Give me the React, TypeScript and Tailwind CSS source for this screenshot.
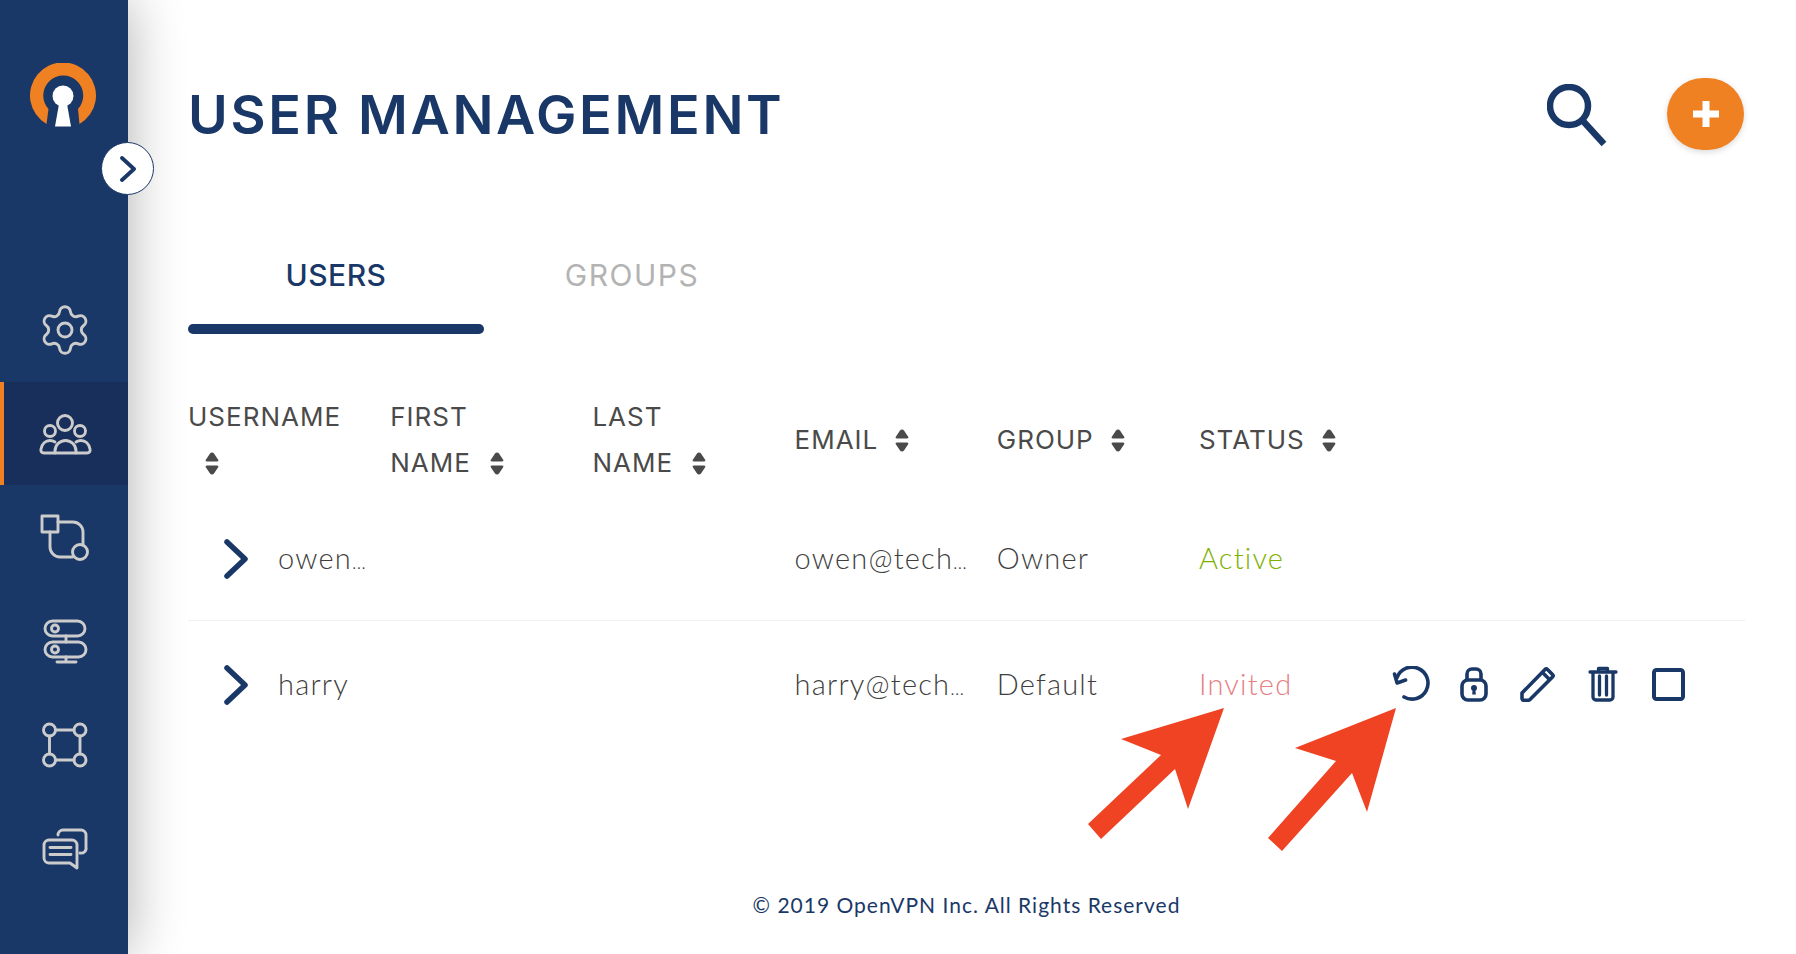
import { ReactNode } from 'react';
import { Settings } from 'lucide-react';

const NAVY = '#1a3867';

function NavIcon({ children }: { children: ReactNode }) {
  return (
    <svg width="56" height="56" viewBox="0 0 56 56" fill="none" stroke="#cccccc" strokeWidth="2.9" strokeLinecap="round" strokeLinejoin="round">
      {children}
    </svg>
  );
}

function NavRow({ active, children }: { active?: boolean; children: ReactNode }) {
  return (
    <div className={active
      ? 'h-[103.6px] flex items-center pl-[33px] pt-[3px] bg-[#182f5b] border-l-4 border-[#ef8122]'
      : 'h-[103.6px] flex items-center pl-[37px]'}>
      {children}
    </div>
  );
}

function SortIcon() {
  return (
    <svg width="14" height="23" viewBox="0 0 14 23" fill="#4a4a4a" className="inline-block">
      <path d="M7 0.500c.9 0 1.500.4 2 1l4 6c.8 1.200.4 2-1 2H2c-1.400 0-1.800-.8-1-2l4-6c.5-.6 1.100-1 2-1z" />
      <path d="M7 22.500c.9 0 1.500-.4 2-1l4-6c.8-1.200.4-2-1-2H2c-1.400 0-1.800.8-1 2l4 6c.5.6 1.100 1 2 1z" />
    </svg>
  );
}

function Chevron() {
  return (
    <svg width="24" height="40" viewBox="0 0 24 40" fill="none" stroke={NAVY} strokeWidth="5.5" strokeLinecap="round" strokeLinejoin="round" className="mt-[2px]">
      <path d="M3 3l18 17L3 37" />
    </svg>
  );
}

// the cut-off marker is much smaller than the letters in this font
function Cut() {
  return <span className="text-[19px] tracking-[0.500px]">…</span>;
}

function HeaderCell({ first, last }: { first: string; last?: string }) {
  return (
    <div className="leading-[46px]">
      {last ? (
        <>
          <div>{first}</div>
          <div className="flex items-center gap-[19px]">{last}<SortIcon /></div>
        </>
      ) : (
        <div className="flex items-center gap-[17px]">{first}<SortIcon /></div>
      )}
    </div>
  );
}

function RowActions() {
  return (
    <div className="flex items-center h-[36px] text-[#1a3867]">
      <svg width="40" height="36" viewBox="0 0 40 36" fill="none" stroke="currentColor" strokeWidth="3.6" strokeLinecap="round" strokeLinejoin="round" className="ml-[-11px]">
        <path d="M7 11.500A16 16 0 1 1 14 31" />
        <path d="M4.500 8l2.600 9 8.500-3" />
      </svg>
      <svg width="28" height="36" viewBox="0 0 28 36" fill="none" stroke="currentColor" strokeWidth="3.6" className="ml-[30px]">
        <path d="M7 15V8a5 5 0 0 1 5-5h4a5 5 0 0 1 5 5v7" />
        <rect x="2" y="14" width="24" height="20" rx="6" />
        <circle cx="14" cy="22" r="3" fill="currentColor" stroke="none" />
        <path d="M12.700 23h2.600l.5 5.500h-3.600z" fill="currentColor" stroke="none" />
      </svg>
      <svg width="36" height="36" viewBox="0 0 36 36" fill="none" stroke="currentColor" strokeWidth="3.600" strokeLinejoin="round" className="ml-[32px]">
        <path d="M2 27L25 3.500c.8-.8 1.700-.8 2.500 0l5 5c.8.8.8 1.700 0 2.500L10 33.500c-.6.6-1.200.8-2 .8H4c-1.300 0-2-.8-2-2z" />
        <path d="M22.500 6.500l8 8" />
      </svg>
      <svg width="30" height="36" viewBox="0 0 30 36" fill="none" stroke="currentColor" strokeWidth="3.300" strokeLinecap="round" strokeLinejoin="round" className="ml-[32px]">
        <path d="M2 6h26" />
        <path d="M10.500 4.500V2.500h9v2" />
        <path d="M5 7v24a3 3 0 0 0 3 3h14a3 3 0 0 0 3-3V7" />
        <path d="M11.500 10v19M18.500 10v19" />
      </svg>
      <svg width="33" height="33" viewBox="0 0 33 33" fill="none" stroke="currentColor" strokeWidth="4" strokeLinejoin="round" className="ml-[34px]">
        <rect x="2" y="2" width="29" height="29" rx="2.500" />
      </svg>
    </div>
  );
}

export default function App() {
  return (
    <div className="relative flex h-[954px] w-[1796px] overflow-hidden bg-white font-['Inter',sans-serif]">
      {/* Sidebar */}
      <aside className="relative z-10 w-[128px] shrink-0 bg-[#1a3867] shadow-[0_0_55px_rgba(0,0,0,0.32)]">
        <div className="h-[278px] pl-[30px] pt-[63px]">
          <svg width="67" height="65" viewBox="30 62 67 65">
            <path d="M46.500 123A33 33 0 1 1 79.500 123L78 108A20 20 0 1 0 48.500 108Z" fill="#ef8122" />
            <circle cx="63" cy="95" r="10.500" fill="#ffffff" />
            <path d="M59 103h8l4 22.500H55z" fill="#ffffff" />
          </svg>
        </div>

        <NavRow>
          <Settings size={56} color="#cccccc" strokeWidth={1.25} />
        </NavRow>
        <NavRow active>
          <NavIcon>
            <circle cx="28" cy="16" r="7.500" />
            <circle cx="13" cy="24" r="5.500" />
            <circle cx="43" cy="24" r="5.500" />
            <path d="M18 46v-2a10.500 10.500 0 0 1 21 0v2z" />
            <path d="M18 46H7c-2.500 0-3.500-1.500-3-4 1-5 4.500-8.500 9-8.500 2 0 3.500.5 5 1.500" />
            <path d="M39 46h11c2.500 0 3.500-1.500 3-4-1-5-4.500-8.500-9-8.500-2 0-3.500.5-5 1.500" />
          </NavIcon>
        </NavRow>
        <NavRow>
          <NavIcon>
            <rect x="5" y="7" width="16" height="16" />
            <path d="M21 13h15a10 10 0 0 1 10 10v13" />
            <path d="M13 23v15a10 10 0 0 0 10 10h12.500" />
            <circle cx="43" cy="43" r="7.500" />
          </NavIcon>
        </NavRow>
        <NavRow>
          <NavIcon>
            <rect x="8" y="8" width="40" height="15" rx="7.500" />
            <rect x="8" y="29" width="41" height="15" rx="7.500" />
            <circle cx="18" cy="15.500" r="3.500" />
            <circle cx="18" cy="36.500" r="3.500" />
            <path d="M29 23v6M29 44v5M20 49h19" />
          </NavIcon>
        </NavRow>
        <NavRow>
          <div className="pt-[2px]">
            <NavIcon>
              <circle cx="12.500" cy="13" r="6" />
              <circle cx="43" cy="13" r="6" />
              <circle cx="12.500" cy="43" r="6" />
              <circle cx="43" cy="43" r="6" />
              <path d="M18.500 13H37M18.500 43H37M12.500 19v18M43 19v18" />
            </NavIcon>
          </div>
        </NavRow>
        <NavRow>
          <div className="pt-[2px]">
            <NavIcon>
              <path d="M21 14a5 5 0 0 1 5-5h18a5 5 0 0 1 5 5v12a5 5 0 0 1-6 6" />
              <path d="M12 19h23a5 5 0 0 1 5 5v23l-7-5H12a5 5 0 0 1-5-5V24a5 5 0 0 1 5-5z" />
              <path d="M13 26.500h21M13 33.500h21" />
            </NavIcon>
          </div>
        </NavRow>

        {/* collapse toggle */}
        <button className="absolute left-[101px] top-[142px] flex h-[53px] w-[53px] items-center justify-center rounded-full bg-white border border-[#1a3867]">
          <svg width="16" height="26" viewBox="0 0 16 26" fill="none" stroke={NAVY} strokeWidth="3.8" strokeLinecap="round" strokeLinejoin="round">
            <path d="M2 2l12 11L2 24" />
          </svg>
        </button>
      </aside>

      {/* Main */}
      <main className="flex flex-1 flex-col pl-[60px] pr-[51px]">
        <header className="flex h-[226px] items-start justify-between">
          <h1 className="mt-[79px] text-[54px] leading-[72px] font-semibold tracking-[2.700px] text-[#1a3867]">USER MANAGEMENT</h1>
          <div className="mt-[78px] flex items-start gap-[60px]">
            <svg width="60" height="64" viewBox="0 0 60 64" fill="none" stroke={NAVY} strokeWidth="6.500" className="mt-[6px]">
              <ellipse cx="22" cy="22" rx="19" ry="19" />
              <path d="M36 37l21 23" />
            </svg>
            <button className="mr-[1px] flex h-[72px] w-[77px] items-center justify-center rounded-full bg-[#ef8122] shadow-[0_2px_6px_rgba(0,0,0,0.15)]">
              <svg width="26" height="26" viewBox="0 0 26 26" fill="#ffffff">
                <path d="M9.500 0h7v9.500H26v7h-9.500V26h-7v-9.500H0v-7h9.500z" />
              </svg>
            </button>
          </div>
        </header>

        {/* Tabs */}
        <div className="grid w-[592px] grid-cols-2 text-[30px] leading-[44px] font-medium tracking-[0.5px]">
          <div className="h-[108px] text-center text-[#1a3867]">
            <div className="pt-[27px] h-[98px]">USERS</div>
            <div className="h-[10px] rounded-full bg-[#1a3867]" />
          </div>
          <div className="pt-[27px] text-center font-normal tracking-[1.500px] text-[#b3b3b3]">GROUPS</div>
        </div>

        {/* Table head */}
        <div className="mt-[60px] grid h-[92px] grid-cols-[repeat(6,202.200px)_1fr] items-center text-[26px] font-normal tracking-[1px] text-[#4a4a4a]">
          <div className="leading-[46px]">
            <div>USERNAME</div>
            <div className="flex h-[46px] items-center pl-[17px]"><SortIcon /></div>
          </div>
          <HeaderCell first="FIRST" last="NAME" />
          <HeaderCell first="LAST" last="NAME" />
          <HeaderCell first="EMAIL" />
          <HeaderCell first="GROUP" />
          <HeaderCell first="STATUS" />
        </div>

        {/* Rows */}
        <div className="mt-[30px] grid h-[105px] grid-cols-[repeat(6,202.200px)_1fr] items-center border-b border-[#f0f0f0] pb-[20px] text-[29px] font-light tracking-[1.200px] text-[#3f3f3f] font-['Lato',sans-serif]">
          <div className="flex items-center pl-[36px]"><Chevron /><span className="ml-[30px]">owen<Cut /></span></div>
          <div />
          <div />
          <div>owen@tech<Cut /></div>
          <div>Owner</div>
          <div className="text-[#7fb000]">Active</div>
        </div>
        <div className="grid h-[126px] grid-cols-[repeat(6,202.200px)_1fr] items-center text-[29px] font-light tracking-[1.200px] text-[#3f3f3f] font-['Lato',sans-serif]">
          <div className="flex items-center pl-[36px]"><Chevron /><span className="ml-[30px]">harry</span></div>
          <div />
          <div />
          <div>harry@tech<Cut /></div>
          <div>Default</div>
          <div className="text-[#e58084]">Invited</div>
          <RowActions />
        </div>

        <footer className="mt-auto pb-[35px] text-center text-[21px] leading-[28px] tracking-[1px] text-[#1a3867] font-['Lato',sans-serif]">
          © 2019 OpenVPN Inc. All Rights Reserved
        </footer>
      </main>

      {/* Annotation arrows drawn over the screenshot */}
      <svg className="absolute left-0 top-0 z-20 pointer-events-none" width="1796" height="954" viewBox="0 0 1796 954" fill="#f04324">
        <path d="M1224 708L1121 739L1161 755L1088 824L1101 839L1175 769L1188 809Z" />
        <path d="M1396 708L1295 748L1336 761L1268 838L1282 851L1352 773L1367 812Z" />
      </svg>
    </div>
  );
}
